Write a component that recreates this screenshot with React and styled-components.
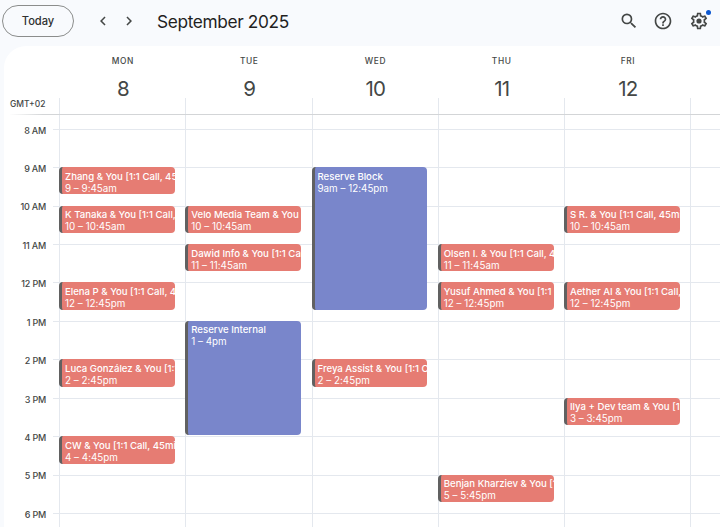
import React from "react";
import styled, { createGlobalStyle } from "styled-components";
import { MdSearch, MdHelpOutline, MdChevronLeft, MdChevronRight } from "react-icons/md";

const HOUR = 38.44;
const QUARTER = HOUR / 4;
const LEAD = 13.7;

const Global = createGlobalStyle`
  * { box-sizing: border-box; }
  html, body { margin: 0; height: 527px; overflow: hidden; }
  body {
    background: #f8fafd;
    color: #1f1f1f;
    font-family: Inter, "Liberation Sans", sans-serif;
  }
`;

const Page = styled.div`
  width: 720px;
  height: 527px;
  overflow: hidden;
  display: flex;
  flex-direction: column;
`;

const Toolbar = styled.header`
  height: 46px;
  flex: none;
  display: flex;
  align-items: flex-start;
  padding: 5px 2px 0 2px;
`;

const TodayButton = styled.button`
  width: 72px;
  height: 32px;
  padding: 0;
  border: 1px solid #8b8d8c;
  border-radius: 16px;
  background: transparent;
  color: #303131;
  font: 500 11.2px Inter, sans-serif;
  letter-spacing: -0.05px;
`;

const IconButton = styled.button`
  width: ${(p) => p.$width}px;
  height: 32px;
  padding: 0;
  border: 0;
  background: transparent;
  color: #444746;
  display: flex;
  align-items: center;
  justify-content: center;
  position: relative;
`;

const Arrows = styled.nav`
  display: flex;
  margin-left: 15.5px;
`;

const Title = styled.h1`
  margin: 0 auto 0 15.5px;
  font-size: 17.3px;
  line-height: 33px;
  font-weight: 400;
  letter-spacing: -0.37px;
`;

const Dot = styled.span`
  position: absolute;
  top: 5px;
  right: 7px;
  width: 5px;
  height: 5px;
  border-radius: 50%;
  background: #0b57d0;
`;

const Tools = styled.div`
  display: flex;
`;

const Panel = styled.main`
  flex: 1;
  min-height: 0;
  margin-left: 4px;
  background: #fff;
  border-top-left-radius: 22px;
  overflow: hidden;
`;

const columns = `55px repeat(5, 126.25px) 1fr`;

const DayHeader = styled.div`
  height: 69px;
  display: grid;
  grid-template-columns: ${columns};
  border-bottom: 1px solid transparent;
  border-image: linear-gradient(to right, #fff 6px, #d3d5d7 40px) 1;
`;

const Zone = styled.div`
  align-self: end;
  padding: 0 0 4px 6px;
  font-size: 8.5px;
  line-height: 12px;
  font-weight: 500;
  color: #444746;
`;

const Day = styled.div`
  display: flex;
  flex-direction: column;
  align-items: center;
  padding: 8px 0 0 1.6px;
  color: #444746;
  background: linear-gradient(#e4e8ee, #e4e8ee) left bottom / 1px 16px no-repeat;
`;

const Weekday = styled.span`
  font-size: 8.4px;
  line-height: 14px;
  font-weight: 500;
  letter-spacing: 0.6px;
`;

const DateNumber = styled.span`
  margin-top: 9px;
  font-size: 20.5px;
  line-height: 24px;
  letter-spacing: -0.8px;
`;

const Grid = styled.div`
  display: grid;
  grid-template-columns: ${columns};
`;

const Track = styled.div`
  display: grid;
  grid-template-columns: minmax(0, 1fr);
  grid-template-rows: ${LEAD}px repeat(44, ${QUARTER}px);
  border-left: ${(p) => (p.$rule ? "1px solid #e4e8ee" : "0")};
`;

const HourCell = styled.div`
  grid-column: 1;
  grid-row: ${(p) => p.$hour * 4 + 2} / span 4;
  border-top: 1px solid #e4e8ee;
`;

const HourLabel = styled.div`
  grid-column: 1;
  grid-row: ${(p) => p.$hour * 4 + 2} / span 4;
  display: grid;
  grid-template-columns: 42px 1fr;
  column-gap: 7px;
  font-size: 9px;
  line-height: 12px;
  font-weight: 500;
  letter-spacing: -0.2px;
  color: #444746;
  text-align: right;
  white-space: nowrap;

  span { margin-top: -4.2px; }
  i { border-top: 1px solid #e4e8ee; }
`;

const EventCard = styled.article`
  grid-column: 1;
  grid-row: ${(p) => p.$start} / span ${(p) => p.$span};
  margin: 0 10.3px 1.5px -1px;
  padding: 3.5px 0 0 3px;
  border-left: 3px solid #616161;
  border-radius: 4px;
  background: ${(p) => (p.$reserve ? "#7986cb" : "#e67c73")};
  color: #fff;
  overflow: hidden;
  white-space: nowrap;
  z-index: 1;
`;

const EventTitle = styled.div`
  font-size: 9.6px;
  line-height: 12px;
  font-weight: 550;
`;

const EventTime = styled.div`
  font-size: 9.8px;
  line-height: 12.5px;
  letter-spacing: 0.02px;
`;

const hours = ["8 AM", "9 AM", "10 AM", "11 AM", "12 PM", "1 PM", "2 PM", "3 PM", "4 PM", "5 PM", "6 PM"];

const days = [
  {
    name: "MON", date: 8, events: [
      { at: 9, title: "Zhang & You [1:1 Call, 45min]", time: "9 – 9:45am" },
      { at: 10, title: "K Tanaka & You [1:1 Call, 45min]", time: "10 – 10:45am" },
      { at: 12, title: "Elena P & You [1:1 Call, 45min]", time: "12 – 12:45pm" },
      { at: 14, title: "Luca González & You [1:1 Call, 45min]", time: "2 – 2:45pm" },
      { at: 16, title: "CW & You [1:1 Call, 45min]", time: "4 – 4:45pm" },
    ],
  },
  {
    name: "TUE", date: 9, events: [
      { at: 10, title: "Velo Media Team & You [1:1 Call, 45min]", time: "10 – 10:45am" },
      { at: 11, title: "Dawid Info & You [1:1 Call, 45min]", time: "11 – 11:45am" },
      { at: 13, quarters: 12, reserve: true, title: "Reserve Internal", time: "1 – 4pm" },
    ],
  },
  {
    name: "WED", date: 10, events: [
      { at: 9, quarters: 15, reserve: true, title: "Reserve Block", time: "9am – 12:45pm" },
      { at: 14, title: "Freya Assist & You [1:1 Call, 45min]", time: "2 – 2:45pm" },
    ],
  },
  {
    name: "THU", date: 11, events: [
      { at: 11, title: "Olsen I. & You [1:1 Call, 45min]", time: "11 – 11:45am" },
      { at: 12, title: "Yusuf Ahmed & You [1:1 Call, 45min]", time: "12 – 12:45pm" },
      { at: 17, title: "Benjan Kharziev & You [1:1 Call, 45min]", time: "5 – 5:45pm" },
    ],
  },
  {
    name: "FRI", date: 12, events: [
      { at: 10, title: "S R. & You [1:1 Call, 45min]", time: "10 – 10:45am" },
      { at: 12, title: "Aether AI & You [1:1 Call, 45min]", time: "12 – 12:45pm" },
      { at: 15, title: "Ilya + Dev team & You [1:1 Call, 45min]", time: "3 – 3:45pm" },
    ],
  },
];

const Gear = () => (
  <svg width="20" height="20" viewBox="0 0 24 24" fill="currentColor">
    <path d="M19.43 12.98c.04-.32.07-.64.07-.98 0-.34-.03-.66-.07-.98l2.11-1.65c.19-.15.24-.42.12-.64l-2-3.46c-.09-.16-.26-.25-.44-.25-.06 0-.12.01-.17.03l-2.49 1c-.52-.4-1.08-.73-1.69-.98l-.38-2.65C14.46 2.18 14.25 2 14 2h-4c-.25 0-.46.18-.49.42l-.38 2.65c-.61.25-1.17.59-1.69.98l-2.49-1c-.06-.02-.12-.03-.18-.03-.17 0-.34.09-.43.25l-2 3.46c-.13.22-.07.49.12.64l2.11 1.65c-.04.32-.07.65-.07.98 0 .33.03.66.07.98l-2.11 1.65c-.19.15-.24.42-.12.64l2 3.46c.09.16.26.25.44.25.06 0 .12-.01.17-.03l2.49-1c.52.4 1.08.73 1.69.98l.38 2.65c.03.24.24.42.49.42h4c.25 0 .46-.18.49-.42l.38-2.65c.61-.25 1.17-.59 1.69-.98l2.49 1c.06.02.12.03.18.03.17 0 .34-.09.43-.25l2-3.46c.12-.22.07-.49-.12-.64l-2.11-1.65zm-1.98-1.71c.04.31.05.52.05.73 0 .21-.02.43-.05.73l-.14 1.13.89.7 1.08.84-.7 1.21-1.27-.51-1.04-.42-.9.68c-.43.32-.84.56-1.25.73l-1.06.43-.16 1.13-.2 1.35h-1.4l-.19-1.35-.16-1.13-1.06-.43c-.43-.18-.83-.41-1.23-.71l-.91-.7-1.06.43-1.27.51-.7-1.21 1.08-.84.89-.7-.14-1.13c-.03-.31-.05-.54-.05-.74s.02-.43.05-.73l.14-1.13-.89-.7-1.08-.84.7-1.21 1.27.51 1.04.42.9-.68c.43-.32.84-.56 1.25-.73l1.06-.43.16-1.13.2-1.35h1.39l.19 1.35.16 1.13 1.06.43c.43.18.83.41 1.23.71l.91.7 1.06-.43 1.27-.51.7 1.21-1.07.85-.89.7.14 1.13z" />
    <circle cx="12" cy="12" r="3.1" />
  </svg>
);

function Hours() {
  return hours.map((h, i) => <HourCell key={h} $hour={i} />);
}

export default function App() {
  return (
    <Page>
      <Global />
      <Toolbar>
        <TodayButton>Today</TodayButton>
        <Arrows>
          <IconButton $width={26} aria-label="Previous week"><MdChevronLeft size={18} /></IconButton>
          <IconButton $width={26} aria-label="Next week"><MdChevronRight size={18} /></IconButton>
        </Arrows>
        <Title>September 2025</Title>
        <Tools>
          <IconButton $width={34} aria-label="Search"><MdSearch size={20} /></IconButton>
          <IconButton $width={34} aria-label="Support"><MdHelpOutline size={20} /></IconButton>
          <IconButton $width={38} aria-label="Settings"><Gear /><Dot /></IconButton>
        </Tools>
      </Toolbar>
      <Panel>
        <DayHeader>
          <Zone>GMT+02</Zone>
          {days.map((d) => (
            <Day key={d.name}>
              <Weekday>{d.name}</Weekday>
              <DateNumber>{d.date}</DateNumber>
            </Day>
          ))}
          <Day />
        </DayHeader>
        <Grid>
          <Track>
            {hours.map((h, i) => (
              <HourLabel key={h} $hour={i}><span>{h}</span><i /></HourLabel>
            ))}
          </Track>
          {days.map((d) => (
            <Track key={d.name} $rule>
              <Hours />
              {d.events.map((e) => (
                <EventCard key={e.title} $start={(e.at - 8) * 4 + 2} $span={e.quarters || 3} $reserve={e.reserve}>
                  <EventTitle>{e.title}</EventTitle>
                  <EventTime>{e.time}</EventTime>
                </EventCard>
              ))}
            </Track>
          ))}
          <Track $rule><Hours /></Track>
        </Grid>
      </Panel>
    </Page>
  );
}
